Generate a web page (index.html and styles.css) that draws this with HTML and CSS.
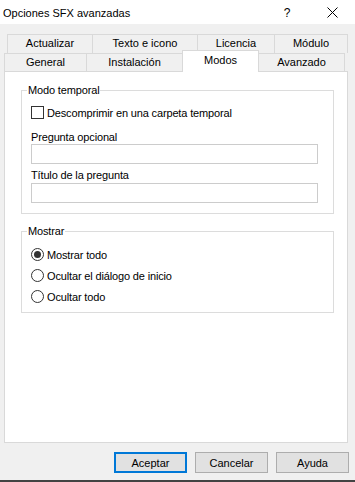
FILE: index.html
```html
<!DOCTYPE html>
<html lang="es">
<head>
    <meta charset="UTF-8">
    <title>Opciones SFX avanzadas</title>
    <link rel="stylesheet" href="styles.css">
</head>
<body>
<div class="window">
    <div class="titlebar">
        <span class="title">Opciones SFX avanzadas</span>
        <div class="caption-buttons">
            <span class="caption-btn help">?</span>
            <span class="caption-btn close">
                <svg width="11" height="11" viewBox="0 0 11 11">
                    <path d="M0.5 0.5 L10.5 10.5 M10.5 0.5 L0.5 10.5" stroke="#000" stroke-width="1" fill="none"/>
                </svg>
            </span>
        </div>
    </div>

    <div class="tabs">
        <div class="tab-row back">
            <div class="tab tab-actualizar">Actualizar</div>
            <div class="tab tab-texto">Texto e icono</div>
            <div class="tab tab-licencia">Licencia</div>
            <div class="tab tab-modulo">Módulo</div>
        </div>
        <div class="tab-row front">
            <div class="tab tab-general">General</div>
            <div class="tab tab-instalacion">Instalación</div>
            <div class="tab tab-modos selected">Modos</div>
            <div class="tab tab-avanzado">Avanzado</div>
        </div>
    </div>

    <div class="panel">
        <fieldset class="group group-temp">
            <legend>Modo temporal</legend>
            <div class="group-body">
                <label class="check-row"><span class="checkbox"></span>Descomprimir en una carpeta temporal</label>
                <div class="field-label first">Pregunta opcional</div>
                <input class="edit" type="text">
                <div class="field-label">Título de la pregunta</div>
                <input class="edit" type="text">
            </div>
        </fieldset>

        <fieldset class="group group-show">
            <legend>Mostrar</legend>
            <div class="group-body radios">
                <label class="radio-row"><span class="radio checked"></span>Mostrar todo</label>
                <label class="radio-row"><span class="radio"></span>Ocultar el diálogo de inicio</label>
                <label class="radio-row"><span class="radio"></span>Ocultar todo</label>
            </div>
        </fieldset>
    </div>

    <div class="buttons">
        <button class="btn default">Aceptar</button>
        <button class="btn">Cancelar</button>
        <button class="btn">Ayuda</button>
    </div>

    <div class="frame-bottom"></div>
</div>
</body>
</html>
```

FILE: styles.css
```css
* {
    box-sizing: border-box;
}
html, body {
    margin: 0;
    padding: 0;
}
body {
    background-color: #f0f0f0;
    font-family: "Liberation Sans", Arial, sans-serif;
    font-size: 11px;
    color: #000;
}
.window {
    width: 355px;
    height: 482px;
    display: flex;
    flex-direction: column;
}

/* title bar */
.titlebar {
    height: 24px;
    background-color: #fff;
    display: flex;
    align-items: center;
}
.title {
    padding-left: 3px;
    padding-top: 1px;
    font-size: 11px;
}
.caption-buttons {
    margin-left: auto;
    display: flex;
    height: 24px;
}
.caption-btn {
    width: 46px;
    display: flex;
    align-items: center;
    justify-content: center;
}
.caption-btn.help {
    font-size: 12px;
    padding-top: 1px;
}
.caption-btn.close {
    width: 45px;
    padding-top: 1px;
}

/* tabs */
.tabs {
    margin-top: 10px;
}
.tab-row {
    display: flex;
}
.tab-row.back {
    height: 19px;
    padding-left: 7px;
}
.tab-row.front {
    height: 18px;
    padding-left: 4px;
    align-items: flex-start;
}
.tab {
    border: 1px solid #d9d9d9;
    border-bottom: none;
    text-align: center;
    line-height: 17px;
    height: 19px;
    white-space: nowrap;
}
.tab + .tab {
    margin-left: -1px;
}
.front .tab {
    height: 18px;
    line-height: 17px;
}
.tab.selected {
    position: relative;
    z-index: 1;
    background-color: #fff;
    margin-top: -3px;
    height: 22px;
    line-height: 17px;
    padding-top: 1px;
}
.tab-actualizar { width: 86px; }
.tab-texto { width: 106px; }
.tab-licencia { width: 78px; }
.tab-modulo { width: 74px; }
.tab-general { width: 83px; }
.tab-instalacion { width: 97px; }
.tab-modos { width: 77px; }
.tab-avanzado { width: 87px; }

/* page */
.panel {
    margin-left: 4px;
    width: 344px;
    height: 372px;
    background-color: #fff;
    border: 1px solid #d9d9d9;
    padding: 0 13px 0 16px;
    letter-spacing: -0.15px;
}
.group {
    margin: 11px 0 0 0;
    padding: 0;
    border: 1px solid #dcdcdc;
    min-width: 0;
}
.group-show {
    margin-top: 10px;
}
.group legend {
    margin-left: 5px;
    padding: 0 1px;
    line-height: 14px;
    font-size: 11px;
}
.group-body {
    padding: 0 0 10px 9px;
}
.check-row {
    display: flex;
    align-items: center;
    height: 13px;
    margin-top: 9px;
    white-space: nowrap;
}
.checkbox {
    width: 13px;
    height: 13px;
    border: 1px solid #333;
    background-color: #fff;
    margin-right: 3px;
    flex: none;
}
.field-label {
    line-height: 14px;
    height: 14px;
    margin-top: 4px;
}
.field-label.first {
    margin-top: 11px;
}
.edit {
    display: block;
    width: 287px;
    height: 20px;
    border: 1px solid #cccccc;
    background-color: #fff;
    margin: 0;
    padding: 0 2px;
    font: inherit;
}
.group-temp .field-label:not(.first) + .edit {
    margin-top: 1px;
}
.radios {
    display: flex;
    flex-direction: column;
    gap: 8px;
    padding-top: 10px;
    padding-bottom: 9px;
}
.radio-row {
    display: flex;
    align-items: center;
    height: 13px;
    white-space: nowrap;
}
.radio {
    width: 13px;
    height: 13px;
    border: 1px solid #333;
    border-radius: 50%;
    background-color: #fff;
    margin-right: 3px;
    flex: none;
    display: flex;
    align-items: center;
    justify-content: center;
}
.radio.checked::after {
    content: "";
    width: 7px;
    height: 7px;
    border-radius: 50%;
    background-color: #333;
}

/* buttons */
.buttons {
    display: flex;
    justify-content: flex-end;
    gap: 8px;
    margin-top: 9px;
    padding-right: 6px;
}
.btn {
    width: 73px;
    height: 21px;
    background-color: #e1e1e1;
    border: 1px solid #adadad;
    font-family: inherit;
    font-size: 11px;
    color: #000;
    padding: 0;
}
.btn.default {
    border: 2px solid #0078d7;
}
.frame-bottom {
    margin-top: auto;
    height: 2px;
    background-color: #434343;
}
```
